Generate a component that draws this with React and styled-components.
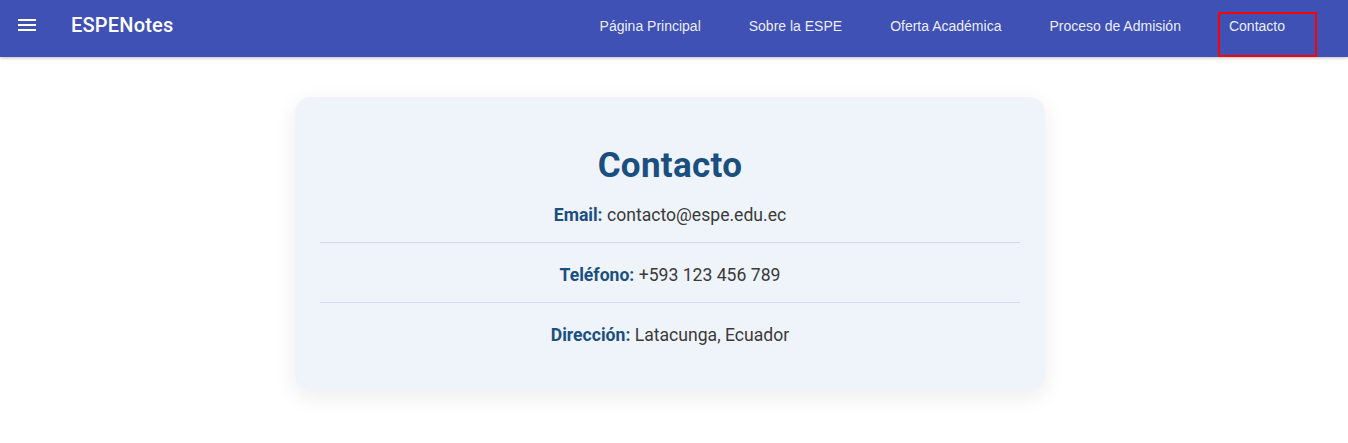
import React from "react";
import styled, { createGlobalStyle } from "styled-components";

const GlobalStyle = createGlobalStyle`
  body {
    margin: 0;
    background: #ffffff;
    font-family: Roboto, "Liberation Sans", sans-serif;
  }
`;

const Bar = styled.header`
  display: flex;
  align-items: flex-start;
  height: 57px;
  background: #3f51b5;
  box-shadow: 0 1px 3px rgba(0, 0, 0, 0.25);
  padding: 0 31px 0 15px;
  box-sizing: border-box;
`;

const MenuButton = styled.button`
  display: flex;
  align-items: center;
  justify-content: center;
  width: 24px;
  height: 50px;
  padding: 0;
  margin: 0 32px 0 0;
  border: none;
  background: none;
  color: #fff;
  cursor: pointer;
`;

const Brand = styled.div`
  font-family: Roboto, sans-serif;
  font-weight: 500;
  font-size: 20px;
  letter-spacing: 0.2px;
  color: #fff;
  line-height: 50px;
`;

const Nav = styled.nav`
  display: flex;
  gap: 26px;
  margin-left: auto;
`;

const NavLink = styled.a`
  box-sizing: border-box;
  margin-top: 12px;
  height: 45px;
  padding: 4px ${(p) => (p.$active ? "30px" : "9px")} 0 9px;
  border: 2px solid ${(p) => (p.$active ? "#ff0000" : "transparent")};
  font-family: "Liberation Sans", Arial, sans-serif;
  font-size: 14px;
  line-height: 17px;
  color: rgba(255, 255, 255, 0.92);
  text-decoration: none;
  white-space: nowrap;
  cursor: pointer;
`;

const Main = styled.main`
  display: flex;
  justify-content: center;
  padding: 40px 8px 50px 0;
`;

const Card = styled.section`
  width: 750px;
  box-sizing: border-box;
  padding: 0 25px 29px;
  background: #eff4fb;
  border-radius: 16px;
  box-shadow: 0 6px 22px rgba(0, 0, 0, 0.08);
  text-align: center;
`;

const Title = styled.h2`
  margin: 0;
  padding-top: 51px;
  font-family: Roboto, sans-serif;
  font-weight: 700;
  font-size: 35px;
  line-height: 35px;
  color: #1a4f80;
  letter-spacing: 0.3px;
`;

const Row = styled.div`
  padding: 19px 0 13px;
  font-size: 17.6px;
  line-height: 27px;
  color: #3a3a3a;
  border-bottom: ${(p) => (p.$last ? "none" : "1px solid #d3dbe8")};
`;

const Label = styled.strong`
  font-weight: 700;
  color: #1a4f80;
`;

const links = [
  "Página Principal",
  "Sobre la ESPE",
  "Oferta Académica",
  "Proceso de Admisión",
  "Contacto",
];

const info = [
  ["Email:", "contacto@espe.edu.ec"],
  ["Teléfono:", "+593 123 456 789"],
  ["Dirección:", "Latacunga, Ecuador"],
];

const App = () => {
  return (
    <>
      <GlobalStyle />
      <Bar>
        <MenuButton aria-label="menu">
          <svg width="24" height="24" viewBox="0 0 24 24" fill="currentColor">
            <path d="M3 18h18v-2H3v2zm0-5h18v-2H3v2zm0-7v2h18V6H3z" />
          </svg>
        </MenuButton>
        <Brand>ESPENotes</Brand>
        <Nav>
          {links.map((l) => (
            <NavLink key={l} $active={l === "Contacto"}>
              {l}
            </NavLink>
          ))}
        </Nav>
      </Bar>
      <Main>
        <Card>
          <Title>Contacto</Title>
          {info.map(([k, v], i) => (
            <Row key={k} $last={i === info.length - 1}>
              <Label>{k}</Label> {v}
            </Row>
          ))}
        </Card>
      </Main>
    </>
  );
};

export default App;
